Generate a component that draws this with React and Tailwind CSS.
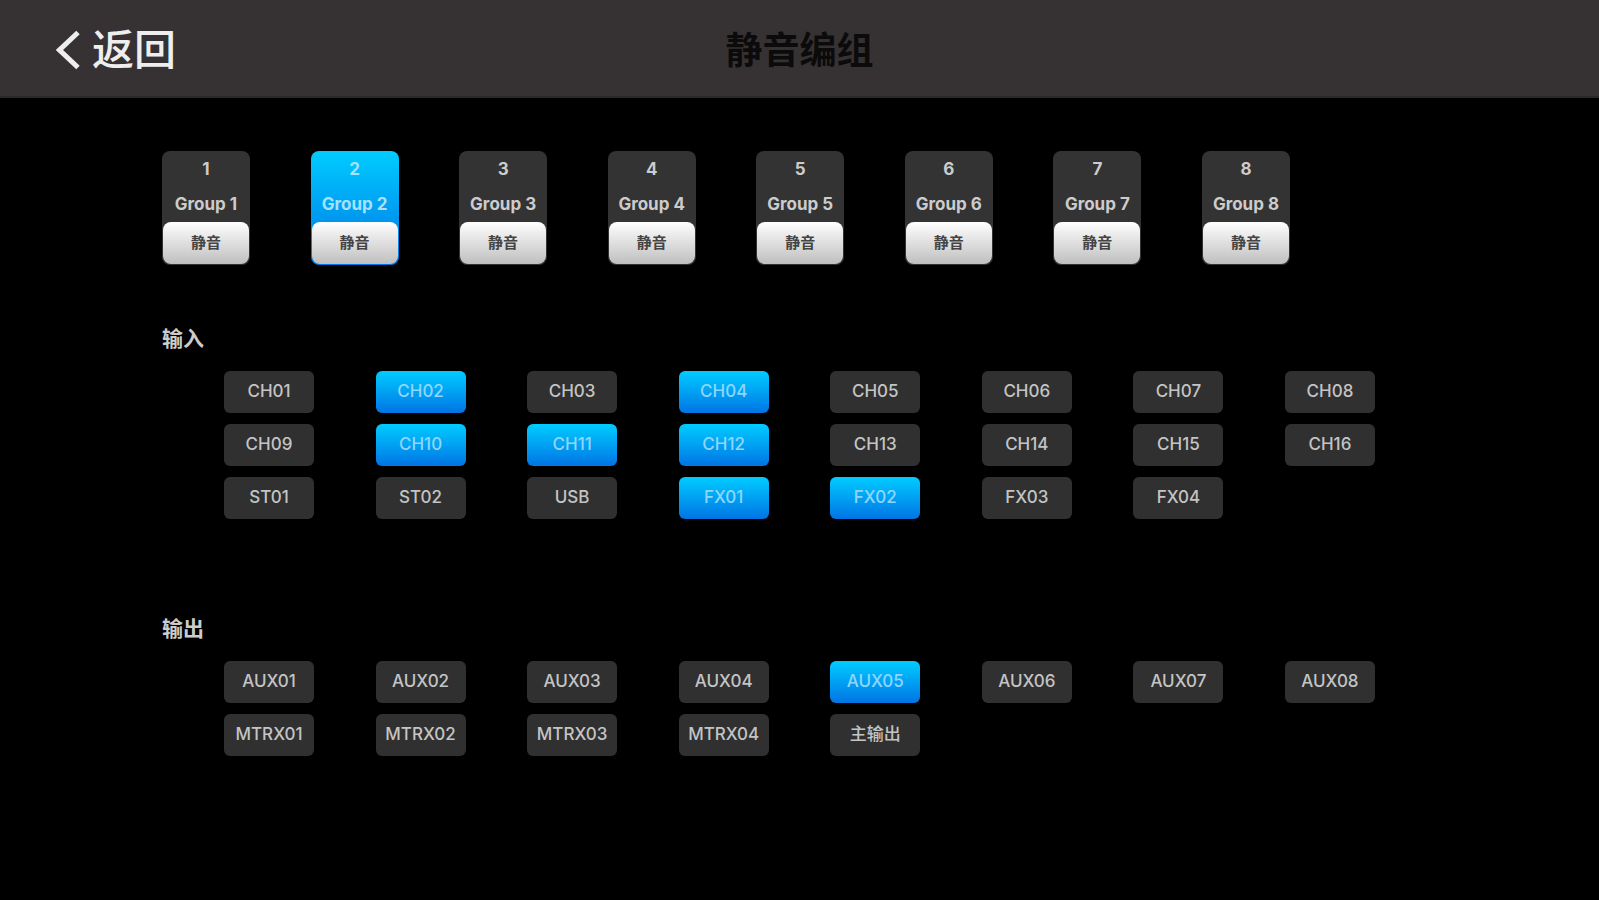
import React, { useState } from "react";

const GROUPS = [1, 2, 3, 4, 5, 6, 7, 8];

const INPUTS = [
  "CH01", "CH02", "CH03", "CH04", "CH05", "CH06", "CH07", "CH08",
  "CH09", "CH10", "CH11", "CH12", "CH13", "CH14", "CH15", "CH16",
  "ST01", "ST02", "USB", "FX01", "FX02", "FX03", "FX04",
];

const OUTPUTS = [
  "AUX01", "AUX02", "AUX03", "AUX04", "AUX05", "AUX06", "AUX07", "AUX08",
  "MTRX01", "MTRX02", "MTRX03", "MTRX04", "主输出",
];

const GroupCard = ({ number, active, onSelect }) => (
  <div
    className={`flex flex-col rounded-lg px-px pb-px ${
      active ? "bg-linear-to-b from-[#00ccff] to-[#0074e4]" : "bg-[#333333]"
    }`}
  >
    <button
      type="button"
      aria-pressed={active}
      onClick={onSelect}
      className={`flex h-[71px] flex-col items-center justify-between pt-2 pb-2 text-[17px] leading-5 font-bold whitespace-nowrap ${
        active ? "text-[#a5e2ff]" : "text-[#cccccc]"
      }`}
    >
      <span>{number}</span>
      <span>Group {number}</span>
    </button>
    <button
      type="button"
      className="h-[42px] rounded-lg bg-linear-to-b from-white to-[#bfbfbf] text-[15px] font-bold text-[#444444]"
    >
      静音
    </button>
  </div>
);

const ChannelSection = ({ title, channels, selected, onToggle }) => (
  <section>
    <h2 className="text-[21px] leading-8 font-bold text-[#cccccc]">{title}</h2>
    <div className="mt-4 grid grid-cols-[repeat(8,90px)] justify-between gap-y-[11px] px-[62px]">
      {channels.map((name) => {
        const on = selected.includes(name);
        return (
          <button
            key={name}
            type="button"
            aria-pressed={on}
            onClick={() => onToggle(name)}
            className={`h-[42px] rounded-md text-[17px] font-medium ${
              on
                ? "bg-linear-to-b from-[#00ccff] to-[#0074e4] text-[#8fd6ff]"
                : "bg-[#303030] text-[#c4c4c4]"
            }`}
          >
            {name}
          </button>
        );
      })}
    </div>
  </section>
);

const App = () => {
  const [group, setGroup] = useState(2);
  const [selected, setSelected] = useState([
    "CH02", "CH04", "CH10", "CH11", "CH12", "FX01", "FX02", "AUX05",
  ]);

  const toggle = (name) =>
    setSelected((prev) =>
      prev.includes(name) ? prev.filter((n) => n !== name) : [...prev, name]
    );

  return (
    <div className="min-h-screen bg-black font-['Inter','Noto_Sans_CJK_SC',sans-serif]">
      <header className="grid h-[98px] grid-cols-[1fr_auto_1fr] items-center border-b-2 border-[#2b2829] bg-[#363233] px-14 pt-1">
        <button type="button" className="flex items-center gap-3 justify-self-start text-[42px] leading-none font-medium text-[#eeeeee]">
          <svg className="h-10 w-6" viewBox="0 0 24 40" fill="none" stroke="currentColor" strokeWidth="5" aria-hidden="true">
            <path d="M22 2.5 3.5 20 22 37.5" />
          </svg>
          返回
        </button>
        <h1 className="text-[37px] leading-none font-bold text-[#0c0b0b]">静音编组</h1>
      </header>

      <main className="px-[162px] pt-[53px]">
        <div className="mr-[147px] grid grid-cols-[repeat(8,88px)] justify-between">
          {GROUPS.map((n) => (
            <GroupCard key={n} number={n} active={n === group} onSelect={() => setGroup(n)} />
          ))}
        </div>

        <div className="mt-[58px] flex flex-col gap-[94px]">
          <ChannelSection title="输入" channels={INPUTS} selected={selected} onToggle={toggle} />
          <ChannelSection title="输出" channels={OUTPUTS} selected={selected} onToggle={toggle} />
        </div>
      </main>
    </div>
  );
};

export default App;
